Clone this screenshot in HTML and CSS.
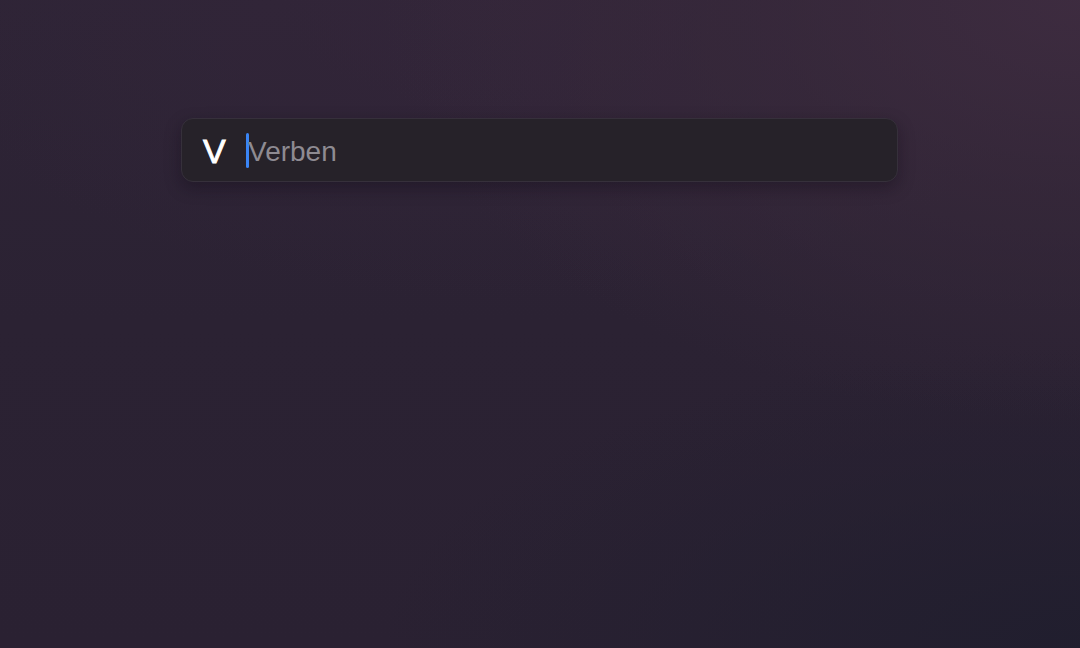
FILE: index.html
```html
<!DOCTYPE html>
<html lang="de">
<head>
<meta charset="utf-8">
<title>Verben</title>
<link rel="stylesheet" href="styles.css">
</head>
<body>
<div class="desktop">
  <div class="search">
    <span class="logo">V</span>
    <div class="field">
      <span class="caret"></span>
      <span class="placeholder">Verben</span>
    </div>
  </div>
</div>
</body>
</html>
```
FILE: styles.css
```css
html, body {
  margin: 0;
  padding: 0;
  width: 1080px;
  height: 648px;
  overflow: hidden;
}
body {
  font-family: "Liberation Sans", Arial, sans-serif;
  background: #2b2233;
}
.desktop {
  width: 1080px;
  height: 648px;
  box-sizing: border-box;
  padding: 118px 0 0 181px;
  background:
    radial-gradient(ellipse 700px 420px at 1080px 0px, rgba(62,44,64,0.95) 0%, rgba(58,42,60,0.6) 45%, rgba(50,36,56,0) 100%),
    radial-gradient(ellipse 700px 300px at 1080px 648px, rgba(32,30,46,0.95) 0%, rgba(34,31,47,0.5) 55%, rgba(34,31,47,0) 100%),
    radial-gradient(ellipse 600px 300px at 500px 0px, rgba(52,38,58,0.8) 0%, rgba(52,38,58,0) 100%),
    linear-gradient(180deg, #2e2436 0%, #2b2233 50%, #2a2132 100%);
}
.search {
  width: 717px;
  height: 64px;
  box-sizing: border-box;
  border-radius: 12px;
  background: #262229;
  border: 1px solid #36303b;
  box-shadow: 0 6px 16px rgba(15, 10, 20, 0.35);
  display: flex;
  align-items: center;
  padding-left: 21px;
}
.logo {
  color: #ffffff;
  font-size: 34px;
  line-height: 1;
  width: 23px;
  margin-top: 2px;
  font-weight: 400;
  -webkit-text-stroke: 0.9px #ffffff;
  paint-order: stroke fill;
}
.field {
  display: flex;
  align-items: center;
  margin-left: 20px;
}
.caret {
  width: 3px;
  height: 35px;
  border-radius: 1.5px;
  background: #3a85f5;
}
.placeholder {
  color: #8e8b92;
  font-size: 28px;
  line-height: 1;
  margin-left: -1px;
  margin-top: 3px;
}
```
